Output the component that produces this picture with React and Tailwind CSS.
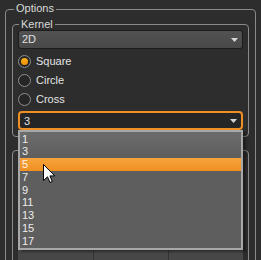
const Arrow = () => (
  <svg width="7" height="4" viewBox="0 0 7 4" className="shrink-0">
    <polygon points="0,0 7,0 3.5,4" fill="#d6d6d6" />
  </svg>
);

const Radio = ({ checked, label }) => (
  <div className="h-[19px] flex items-center gap-[5px]">
    <div className="w-[13px] h-[13px] rounded-full border border-[#8e8e8e] bg-[#262626] flex items-center justify-center">
      {checked && <div className="w-[7px] h-[7px] rounded-full bg-linear-to-b from-[#ffb21a] to-[#f09000]" />}
    </div>
    <span className="text-[#e4e4e4]">{label}</span>
  </div>
);

export default function App() {
  const items = ['1', '3', '5', '7', '9', '11', '13', '15', '17'];
  return (
    <div className="relative w-[261px] h-[260px] overflow-hidden bg-[#2d2d2d] font-['Liberation_Sans',Arial,sans-serif] text-[11px] text-[#e0e0e0]">
      <fieldset className="mx-[5px] mt-[3px] border border-[#8a8a8a] rounded-[4px] px-[6px] pb-[10px]">
        <legend className="ml-[2px] px-[2px] leading-[11px] pb-[2px] text-[#dadada]">Options</legend>
        <fieldset className="mt-[3px] border border-[#8a8a8a] rounded-[4px] px-[5px] pb-[6px]">
          <legend className="ml-[1px] px-[2px] leading-[11px] text-[#dadada]">Kernel</legend>
          <div className="h-[19px] flex items-center justify-between rounded-[3px] border border-[#1c1c1c] bg-linear-to-b from-[#525252] to-[#494949] pl-[3px] pr-[4px]">
            <span>2D</span>
            <Arrow />
          </div>
          <div className="mt-[3px] flex flex-col">
            <Radio checked label="Square" />
            <Radio label="Circle" />
            <Radio label="Cross" />
          </div>
          <div className="mt-[2px] h-[19px] flex items-center justify-between rounded-[4px] border-2 border-[#ee9026] bg-[#262626] pl-[4px] pr-[4px]">
            <span className="pt-[2px]">3</span>
            <Arrow />
          </div>
        </fieldset>
        <div className="mt-[13px] border border-[#8a8a8a] rounded-[4px] px-[5px] pt-[8px] h-[200px]">
          <div className="grid grid-cols-3 h-[150px] bg-[#474747]">
            <div />
            <div className="border-l border-[#343434]" />
            <div className="border-l border-[#343434]" />
          </div>
        </div>
      </fieldset>

      <div className="absolute left-[18px] top-[130px] w-[225px] h-[120px] border-2 border-[#a8a8a8] bg-linear-to-b from-[#6c6c6c] via-[#5e5e5e] via-[22%] to-[#5e5e5e] shadow-[3px_2px_2px_rgba(0,0,0,0.35)] pt-[0.5px]">
        {items.map((it) => (
          <div
            key={it}
            className={
              it === '5'
                ? 'h-[12.75px] flex items-center pl-[2px] bg-linear-to-b from-[#f7a43c] to-[#ef9020] text-[#fff4e6]'
                : 'h-[12.75px] flex items-center pl-[2px] text-[#ececec]'
            }
          >
            {it}
          </div>
        ))}
      </div>

      <svg className="absolute left-[43px] top-[164px]" width="13" height="20" viewBox="0 0 13 20">
        <path
          d="M0.5 0.5 L0.5 16.5 L4.5 12.8 L7 18.5 L9.3 17.5 L6.9 11.9 L11.8 11.9 Z"
          fill="#ffffff"
          stroke="#000000"
          strokeWidth="1"
          strokeLinejoin="miter"
        />
      </svg>
    </div>
  );
}
